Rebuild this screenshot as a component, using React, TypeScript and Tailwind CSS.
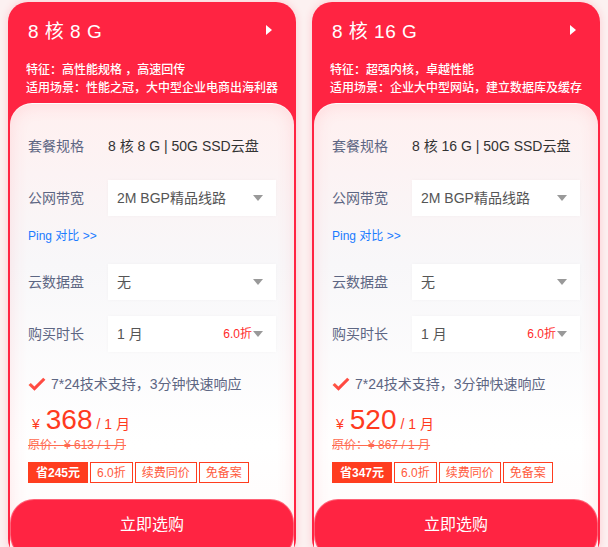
import React from "react";

const FONT = { fontFamily: '"Liberation Sans", "Noto Sans CJK SC", sans-serif' };

function Caret() {
  return (
    <svg width="10" height="6" viewBox="0 0 10 6" className="shrink-0">
      <path d="M0 0 L10 0 L5 6 Z" fill="#999" />
    </svg>
  );
}

function Select({ text, extra }: { text: string; extra?: string }) {
  return (
    <div className="w-[168px] h-[36px] bg-white flex items-center pl-[9px] pr-[13px] shadow-[0_0_4px_rgba(0,0,0,0.03)]">
      <span className="text-[14px] text-[#555] flex-1">{text}</span>
      {extra && <span className="text-[12px] text-[#ff2a2a] mr-[1px]">{extra}</span>}
      <Caret />
    </div>
  );
}

function Row({ label, children }: { label: string; children: React.ReactNode }) {
  return (
    <div className="flex items-center">
      <span className="w-[80px] text-[14px] text-[#5d6683]">{label}</span>
      {children}
    </div>
  );
}

function Card(p: {
  title: string;
  feat: string;
  scene: string;
  spec: string;
  price: string;
  orig: string;
  save: string;
}) {
  return (
    <div className="w-[288px] rounded-[20px] bg-[#ff2442] px-[2px] shadow-[0_0_8px_rgba(255,36,66,0.18)] flex flex-col shrink-0">
      <div className="h-[101px] shrink-0 pl-[16px] pr-[4px] pt-[18px]">
        <div className="flex items-center justify-between h-[24px] pr-[18px]">
          <span className="text-[19px] text-white tracking-[0.5px] ml-[2px]">{p.title}</span>
          <svg width="6" height="10" viewBox="0 0 6 10" className="-mt-[5px]">
            <path d="M0 0 L6 5 L0 10 Z" fill="#fff" />
          </svg>
        </div>
        <div className="mt-[17px] text-[12px] leading-[18px] text-white font-medium whitespace-nowrap">
          <div>{p.feat}</div>
          <div>{p.scene}</div>
        </div>
      </div>
      <div className="shrink-0 rounded-t-[22px] border-t border-white/70 bg-[linear-gradient(180deg,#fff0f0_0%,#f8f7f9_35%,#ffffff_75%,#fffafa_100%)] shadow-[inset_0_0_18px_rgba(255,60,80,0.13)] flex flex-col">
        <div className="pl-[18px] pr-[18px] pt-[32px] flex flex-col">
          <div className="h-[20px] flex items-center">
            <Row label="套餐规格">
              <span className="text-[14px] text-[#333]">{p.spec}</span>
            </Row>
          </div>
          <div className="mt-[24px]">
            <Row label="公网带宽">
              <Select text="2M BGP精品线路" />
            </Row>
          </div>
          <div className="mt-[12px] h-[16px] flex items-center text-[12px] text-[#1a7bff]">Ping 对比 &gt;&gt;</div>
          <div className="mt-[20px]">
            <Row label="云数据盘">
              <Select text="无" />
            </Row>
          </div>
          <div className="mt-[16px]">
            <Row label="购买时长">
              <Select text="1 月" extra="6.0折" />
            </Row>
          </div>
          <div className="mt-[22px] h-[20px] flex items-center">
            <svg width="18" height="15" viewBox="0 0 18 15" className="mr-[5px]">
              <defs>
                <linearGradient id="ck" x1="0" y1="0" x2="1" y2="1">
                  <stop offset="0" stopColor="#ff6a4a" />
                  <stop offset="1" stopColor="#ff2f3a" />
                </linearGradient>
              </defs>
              <path d="M0.5 8 L2.8 6 L6.4 9.6 L15.2 0.8 L17.4 2.8 L6.5 13.8 Z" fill="url(#ck)" />
            </svg>
            <span className="text-[14px] text-[#5d6683]">7*24技术支持，3分钟快速响应</span>
          </div>
          <div className="mt-[10px] h-[32px] flex items-baseline text-[#ff3a1e] pl-[4px]">
            <span className="text-[14px] mr-[6px]">¥</span>
            <span className="text-[28px] leading-[32px]">{p.price}</span>
            <span className="text-[14px] ml-[4px]">/ 1 月</span>
          </div>
          <div className="mt-[1px] h-[16px] flex items-center">
            <span className="text-[12px] text-[#ff6a50] line-through">原价：¥ {p.orig} / 1 月</span>
          </div>
          <div className="mt-[9px] flex gap-[2px] h-[21px]">
            <span className="h-full px-[8px] bg-[#ff3d1f] text-white text-[12px] font-bold flex items-center">{p.save}</span>
            <span className="h-full px-[6px] bg-white border border-[#ff3d1f] text-[#ff5a3c] text-[12px] flex items-center">6.0折</span>
            <span className="h-full px-[6px] bg-white border border-[#ff3d1f] text-[#ff5a3c] text-[12px] flex items-center">续费同价</span>
            <span className="h-full px-[6px] bg-white border border-[#ff3d1f] text-[#ff5a3c] text-[12px] flex items-center">免备案</span>
          </div>
        </div>
        <div className="mt-[16px] h-[60px] rounded-[24px] bg-[#ff2442] border border-[#ff8a9a]/60 flex justify-center pt-[15px]">
          <span className="text-[16px] text-white leading-[20px]">立即选购</span>
        </div>
      </div>
    </div>
  );
}

export default function App() {
  return (
    <div className="w-[608px] h-[547px] overflow-hidden bg-[#fcf1f1] flex items-start gap-[16px] px-[8px] pt-[2px]" style={FONT}>
      <Card
        title="8 核 8 G"
        feat="特征：高性能规格 ，高速回传"
        scene="适用场景：性能之冠，大中型企业电商出海利器"
        spec="8 核 8 G | 50G SSD云盘"
        price="368"
        orig="613"
        save="省245元"
      />
      <Card
        title="8 核 16 G"
        feat="特征：超强内核，卓越性能"
        scene="适用场景：企业大中型网站，建立数据库及缓存"
        spec="8 核 16 G | 50G SSD云盘"
        price="520"
        orig="867"
        save="省347元"
      />
    </div>
  );
}
